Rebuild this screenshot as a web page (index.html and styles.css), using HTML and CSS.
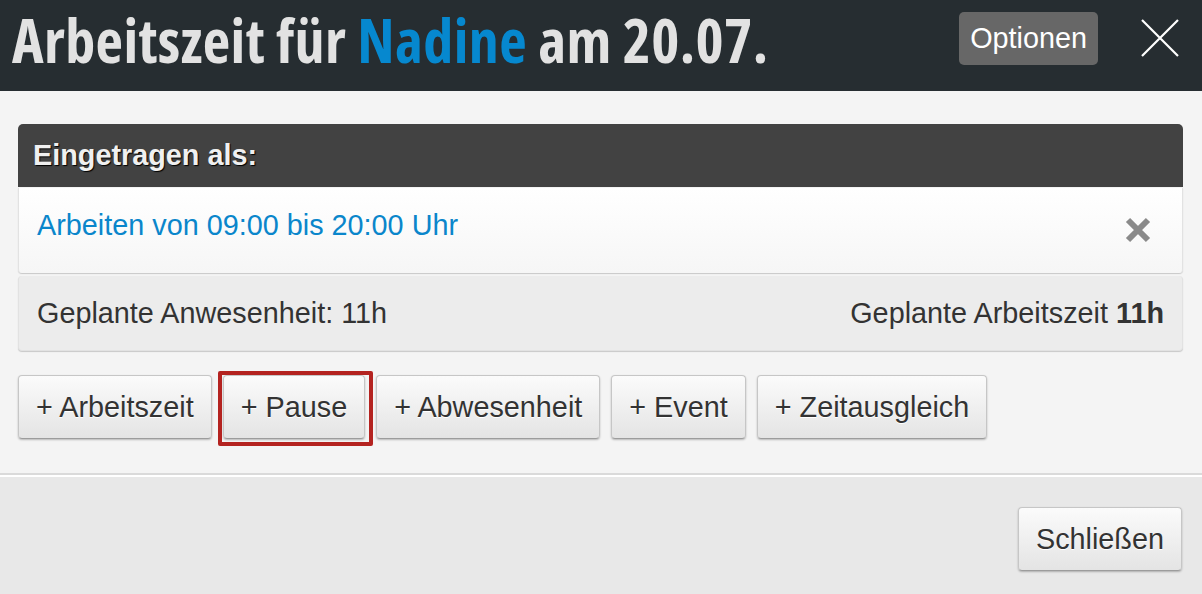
FILE: index.html
```html
<!DOCTYPE html>
<html lang="de">
<head>
    <meta charset="UTF-8">
    <meta name="viewport" content="width=device-width, initial-scale=1.0">
    <title>Arbeitszeit</title>
<link rel="stylesheet" href="styles.css">
</head>
<body>
    <div class="dialog">
        <div class="dialog-head">
            <h1 class="dialog-title">Arbeitszeit für <span class="person">Nadine</span> am 20.07.</h1>
            <button class="options-button">Optionen</button>
            <button class="close-button" aria-label="close">
                <svg width="40" height="40" viewBox="0 0 40 40"><path d="M2 2 L38 38 M38 2 L2 38" stroke="#fff" stroke-width="2.2" fill="none"/></svg>
            </button>
        </div>
        <div class="dialog-body">
            <div class="panel">
                <div class="panel-title">Eingetragen als:</div>
                <div class="entry">
                    <a class="entry-link" href="#">Arbeiten von 09:00 bis 20:00 Uhr</a>
                    <span class="entry-remove">
                        <svg width="28" height="26" viewBox="0 0 28 26"><path d="M4 3 L24 23 M24 3 L4 23" stroke="#8a8a8a" stroke-width="6" fill="none"/></svg>
                    </span>
                </div>
                <div class="summary">
                    <span>Geplante Anwesenheit: 11h</span>
                    <span>Geplante Arbeitszeit <b>11h</b></span>
                </div>
            </div>
            <div class="add-buttons">
                <button class="btn">+ Arbeitszeit</button>
                <button class="btn marked">+ Pause</button>
                <button class="btn">+ Abwesenheit</button>
                <button class="btn">+ Event</button>
                <button class="btn">+ Zeitausgleich</button>
            </div>
        </div>
        <div class="dialog-foot">
            <button class="btn">Schließen</button>
        </div>
    </div>
</body>
</html>
```

FILE: styles.css
```css
body{
    margin:0;
    font-family:"Liberation Sans", Arial, sans-serif;
    background-color:#e8e8e8;
}
.dialog{
    display:flex;
    flex-direction:column;
    min-height:594px;
}
.dialog-head{
    display:flex;
    align-items:flex-start;
    height:91px;
    padding:0 22px 0 12px;
    box-sizing:border-box;
    background-color:#262d31;
}
.dialog-title{
    flex:1;
    margin:0;
    font-family:"Open Sans", sans-serif;
    font-weight:bold;
    font-stretch:75%;
    font-size:60px;
    line-height:80px;
    letter-spacing:0.4px;
    color:#e2e2e2;
    white-space:nowrap;
}
.person{
    color:#0688cf;
}
.options-button{
    height:53px;
    margin-top:12px;
    margin-right:42px;
    padding:0 11px;
    font-family:"Liberation Sans", Arial, sans-serif;
    font-size:28.8px;
    color:white;
    background-color:#676767;
    border:none;
    border-radius:5px;
}
.close-button{
    display:flex;
    margin-top:18px;
    background:transparent;
    border:none;
    padding:0;
}
.dialog-body{
    padding:33px 19px 34px 18px;
    background-color:#f4f4f4;
    border-bottom:2px solid #dadada;
    box-shadow:0 2px 0 #fff;
}
.panel{
    display:flex;
    flex-direction:column;
    gap:3px;
}
.panel-title{
    height:63px;
    display:flex;
    align-items:center;
    padding-left:15px;
    font-size:28.8px;
    font-weight:bold;
    color:#f0f0f0;
    text-shadow:1px 1px 1px #000;
    background-color:#424242;
    border-radius:5px 5px 0 0;
    margin-bottom:-2px;
}
.entry{
    display:flex;
    justify-content:space-between;
    align-items:flex-start;
    height:85px;
    padding:0 30px 0 18px;
    background:linear-gradient(#ffffff, #f6f6f6);
    border-radius:0 0 4px 4px;
    box-shadow:0 1px 1px #c8c8c8;
    border-left:1px solid #e2e2e2;
    border-right:1px solid #e2e2e2;
}
.entry-link{
    margin-top:21px;
    font-size:28.8px;
    color:#0a86cb;
    text-decoration:none;
}
.entry-remove{
    margin-top:29px;
    filter:blur(0.6px);
}
.summary{
    display:flex;
    justify-content:space-between;
    align-items:center;
    height:74px;
    padding:0 18px;
    font-size:28.8px;
    color:#333;
    background-color:#ececec;
    border-radius:4px;
    box-shadow:0 1px 1px #c8c8c8;
    border:1px solid #e2e2e2;
    border-top:none;
}
.add-buttons{
    display:flex;
    gap:11px;
    margin-top:24px;
}
.btn{
    height:64px;
    padding:0 17px;
    font-family:"Liberation Sans", Arial, sans-serif;
    font-size:28.8px;
    color:#333;
    text-shadow:0 1px 0 #fff;
    background:linear-gradient(#fbfbfb, #e4e4e4);
    border:1px solid #c6c6c6;
    border-bottom-color:#9c9c9c;
    border-radius:4px;
    box-shadow:0 1px 2px rgba(0,0,0,0.25);
    cursor:pointer;
}
.marked{
    position:relative;
}
/* red box around the highlighted button */
.marked::after{
    content:"";
    position:absolute;
    top:-5px;
    left:-6px;
    right:-9px;
    bottom:-8px;
    border:4px solid #b42320;
    border-radius:2px;
}
.dialog-foot{
    display:flex;
    justify-content:flex-end;
    padding:30px 20px 0 0;
    flex:1;
    background-color:#e8e8e8;
    margin-top:2px;
}
```
